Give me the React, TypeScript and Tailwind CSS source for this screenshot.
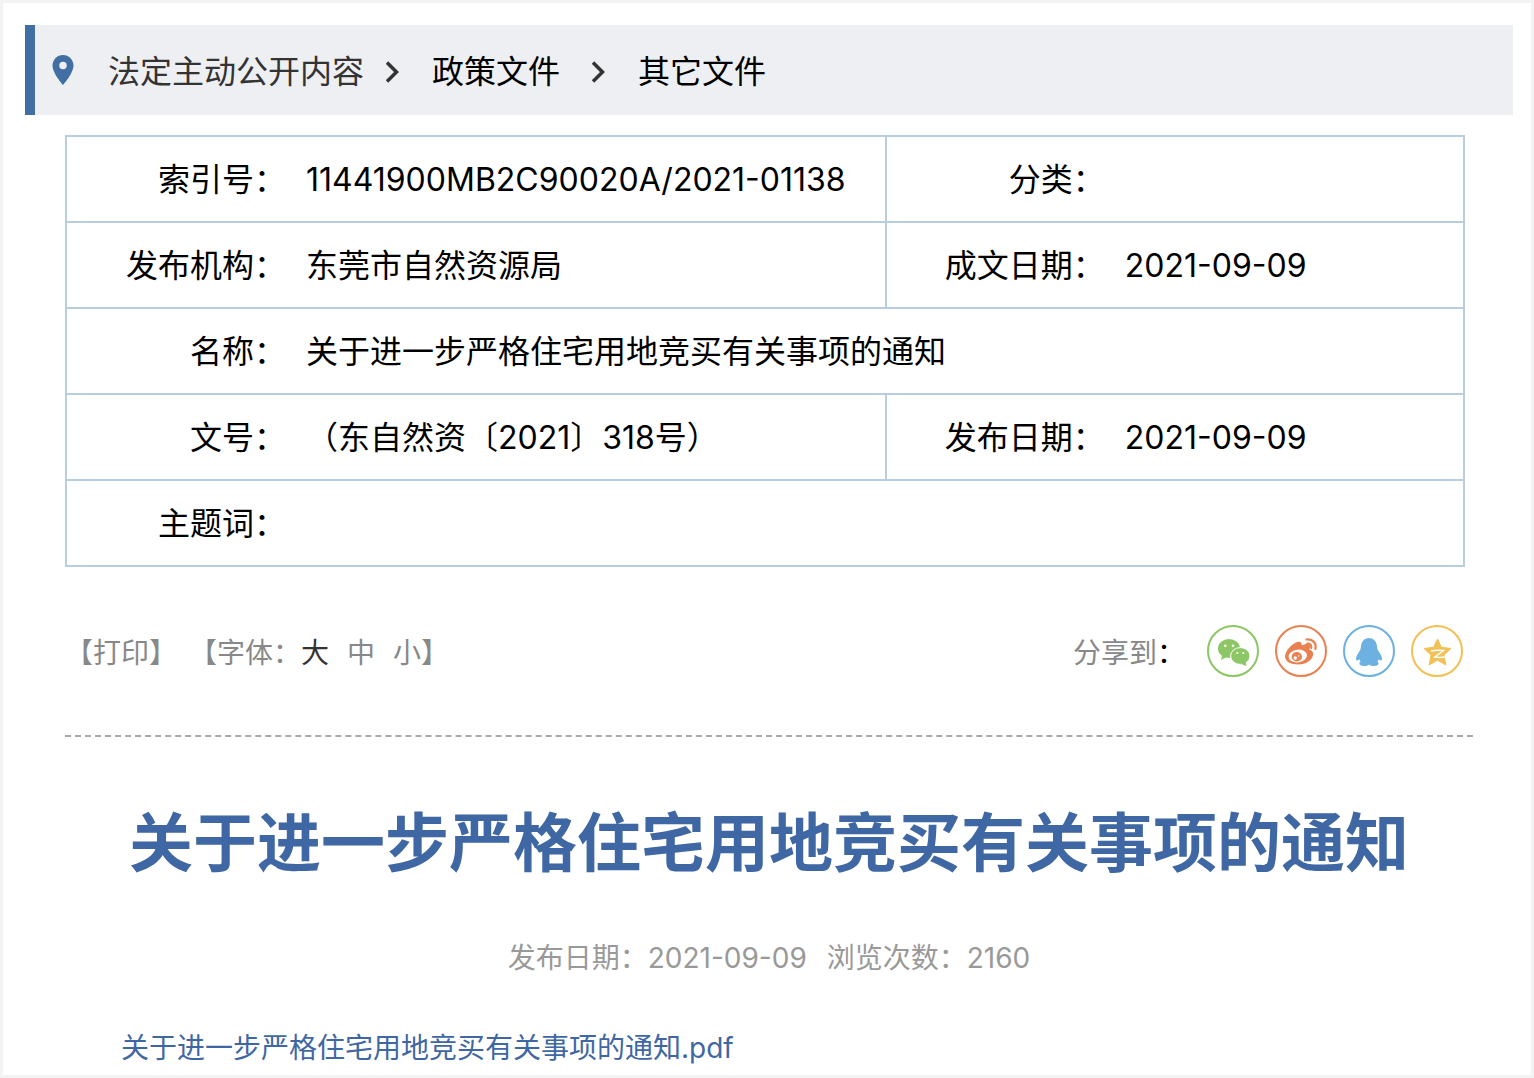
import React from 'react';
import { MdLocationOn } from 'react-icons/md';

const CRUMBS = ['法定主动公开内容', '政策文件', '其它文件'];

const WechatIcon: React.FC = () => (
  <svg viewBox="0 0 34 30" className="w-[34px] h-[30px]" fill="currentColor">
    <ellipse cx="13" cy="12.500" rx="11" ry="9.500" />
    <path d="M6.500 18l-1.500 6 6-3z" />
    <ellipse cx="24.300" cy="20" rx="9.700" ry="8.400" stroke="#fff" strokeWidth="1" />
    <path d="M25 28l5.500 2-1-4.500z" />
    <g fill="#fff">
      <circle cx="9.300" cy="9.700" r="1.300" />
      <circle cx="17" cy="9.700" r="1.300" />
      <circle cx="21.300" cy="17" r="1.100" />
      <circle cx="27.300" cy="17" r="1.100" />
    </g>
  </svg>
);

const WeiboIcon: React.FC = () => (
  <svg viewBox="0 0 34 30" className="w-[34px] h-[30px]">
    <path
      d="M1 20.500c0-4.500 4.500-10 9.500-13.200 4-2.500 7.700-2.200 7.200 2.200 3.500-1.600 8.500-2.600 8.300 1.300 0 1-.4 1.900-.6 2.600 2.300.8 3.800 2.200 3.800 4.600 0 5.500-7 10.500-15 10.500C6.800 28.500 1 25.500 1 20.500z"
      fill="currentColor"
    />
    <ellipse cx="13.800" cy="20" rx="9.300" ry="6.300" transform="rotate(-8 13.800 20)" fill="#fff" />
    <ellipse cx="12.800" cy="20.800" rx="5.200" ry="4.700" fill="currentColor" />
    <circle cx="11.300" cy="22" r="1.700" fill="#fff" />
    <circle cx="14.600" cy="20" r=".8" fill="#fff" />
    <g fill="none" stroke="currentColor" strokeWidth="2.200" strokeLinecap="round">
      <path d="M22.500 3.500c5.800-1 10.300 3.500 8.800 9.500" />
      <path d="M23.300 7.700c2.900-.4 4.500 1.600 3.900 4.300" />
    </g>
  </svg>
);

const QqIcon: React.FC = () => (
  <svg viewBox="0 0 28 30" className="w-7 h-[30px]" fill="currentColor">
    <path d="M14 2C9 2 6.500 5.700 6 10.200c-.2 1.700-.3 2.800-1.100 4.300C3.300 17.300 1.200 20 1 22.500c0 1.500.6 2.300 1.300 2 .7-.3 1.300-.7 1.900-1.300.3.900.8 1.700 1.500 2.400-.9.500-1.300 1.200-1.300 2 0 1.600 1.800 2.400 4.600 2.400 2 0 3.700-.5 5-1.600 1.300 1.100 3 1.600 5 1.600 2.800 0 4.600-.8 4.600-2.400 0-.8-.4-1.500-1.300-2 .7-.7 1.200-1.500 1.500-2.400.6.600 1.200 1 1.900 1.300.7.300 1.300-.5 1.300-2-.2-2.500-2.300-5.200-3.900-8-.8-1.500-.9-2.600-1.100-4.300C21.500 5.700 19 2 14 2z" />
  </svg>
);

const QzoneIcon: React.FC = () => (
  <svg viewBox="0 0 30 30" className="w-[30px] h-[30px]">
    <path
      d="M15.500 3l3.900 8.300 9.600 1.200-7 6.600 1.900 9.900-8.400-4.800L7.100 29 9 19.100l-7-6.600 9.600-1.200z"
      fill="currentColor"
      stroke="currentColor"
      strokeWidth="1"
      strokeLinejoin="round"
    />
    <path d="M9 15c4-.8 8-.8 12.500-.4L12.800 21c3.700.6 7 .6 11.500-.2" fill="none" stroke="#fff" strokeWidth="1.500" />
  </svg>
);

const SHARES = [
  { label: '微信', className: 'border-[#8cc665] text-[#8cc665]', icon: <WechatIcon /> },
  { label: '微博', className: 'border-[#e9804f] text-[#e9804f]', icon: <WeiboIcon /> },
  { label: 'QQ', className: 'border-[#6cb1e1] text-[#6cb1e1]', icon: <QqIcon /> },
  { label: 'QQ空间', className: 'border-[#f2c055] text-[#f2c055]', icon: <QzoneIcon /> },
];

const Label: React.FC<{ children: React.ReactNode }> = ({ children }) => (
  <th scope="row" className="h-[86px] px-0 pt-0.5 pb-0 text-right font-normal whitespace-nowrap">
    {children}
  </th>
);

const Value: React.FC<{ children?: React.ReactNode; colSpan?: number; last?: boolean }> = ({ children, colSpan, last }) => (
  <td colSpan={colSpan} className={last ? 'pt-0.5 pb-0 pl-5 pr-0' : 'pt-0.5 pb-0 pl-5 pr-0 border-r-2 border-[#b9cde0]'}>
    {children}
  </td>
);

export default function App() {
  return (
    <div className="min-h-screen border-[3px] border-[#f3f3f3] bg-white pt-[22px] pl-[22px] pr-[18px] pb-1 text-black font-['Inter','Noto_Sans_CJK_SC',sans-serif]">
      <nav className="flex items-center h-[90px] border-l-10 border-[#426fa3] bg-[#eeeff3] pl-2.5 text-[32px]">
        <MdLocationOn className="w-9 h-9 mr-[27px] text-[#426fa3]" />
        {CRUMBS.map((crumb, i) => (
          <React.Fragment key={crumb}>
            {i > 0 && (
              <svg viewBox="0 0 14 22" className={i === 1 ? 'w-[14px] h-[22px] mt-1 ml-[22px] mr-8' : 'w-[14px] h-[22px] mt-1 mx-8'} fill="none" stroke="#333" strokeWidth="3.500">
                <path d="M1 1.500l9.500 9.500L1 20.500" />
              </svg>
            )}
            <a href="#" className={i === 0 ? 'pt-1 text-[#333]' : 'pt-1 text-black'}>{crumb}</a>
          </React.Fragment>
        ))}
      </nav>

      <main className="pt-5 px-10">
        <div className="pr-2">
          <table className="w-full table-fixed border-collapse border-2 border-[#b9cde0] text-[32px] leading-10">
            <colgroup>
              <col className="w-[220px]" />
              <col className="w-[42.9%]" />
              <col className="w-[219px]" />
              <col />
            </colgroup>
            <tbody>
              <tr className="border-b-2 border-[#b9cde0]">
                <Label>索引号：</Label>
                <Value>11441900MB2C90020A/2021-01138</Value>
                <Label>分类：</Label>
                <Value last />
              </tr>
              <tr className="border-b-2 border-[#b9cde0]">
                <Label>发布机构：</Label>
                <Value>东莞市自然资源局</Value>
                <Label>成文日期：</Label>
                <Value last>2021-09-09</Value>
              </tr>
              <tr className="border-b-2 border-[#b9cde0]">
                <Label>名称：</Label>
                <Value colSpan={3} last>关于进一步严格住宅用地竞买有关事项的通知</Value>
              </tr>
              <tr className="border-b-2 border-[#b9cde0]">
                <Label>文号：</Label>
                <Value>（东自然资〔2021〕318号）</Value>
                <Label>发布日期：</Label>
                <Value last>2021-09-09</Value>
              </tr>
              <tr>
                <Label>主题词：</Label>
                <Value colSpan={3} last />
              </tr>
            </tbody>
          </table>
        </div>

        <div className="flex items-center justify-between mt-[58px] pr-[10px] text-[28px] text-[#888]">
          <div className="flex items-center pt-1">
            <button type="button">【打印】</button>
            <div className="flex items-center ml-3">
              <span>【字体：</span>
              <button type="button" className="mr-[18px] text-[#333]">大</button>
              <button type="button" className="mr-[18px]">中</button>
              <button type="button">小</button>
              <span>】</span>
            </div>
          </div>
          <div className="flex items-center gap-4">
            <span className="mr-[6px] pt-1">分享到<span className="text-black">：</span></span>
            {SHARES.map((share) => (
              <button
                key={share.label}
                type="button"
                aria-label={share.label}
                className={`flex items-center justify-center w-[52px] h-[52px] rounded-full border-2 ${share.className}`}
              >
                {share.icon}
              </button>
            ))}
          </div>
        </div>

        <hr className="mt-[58px] border-0 border-t-2 border-dashed border-[#aaa]" />

        <h1 className="mt-[58px] text-center text-[64px] leading-[96px] font-bold text-[#3f67a3]">
          关于进一步严格住宅用地竞买有关事项的通知
        </h1>
        <p className="mt-[46px] text-center text-[28px] leading-[42px] text-[#999]">
          发布日期：2021-09-09<span className="ml-5">浏览次数：2160</span>
        </p>
        <p className="mt-12 pl-14 text-[28px] leading-[42px]">
          <a href="#" className="text-[#3f67a3]">关于进一步严格住宅用地竞买有关事项的通知.pdf</a>
        </p>
      </main>
    </div>
  );
}
